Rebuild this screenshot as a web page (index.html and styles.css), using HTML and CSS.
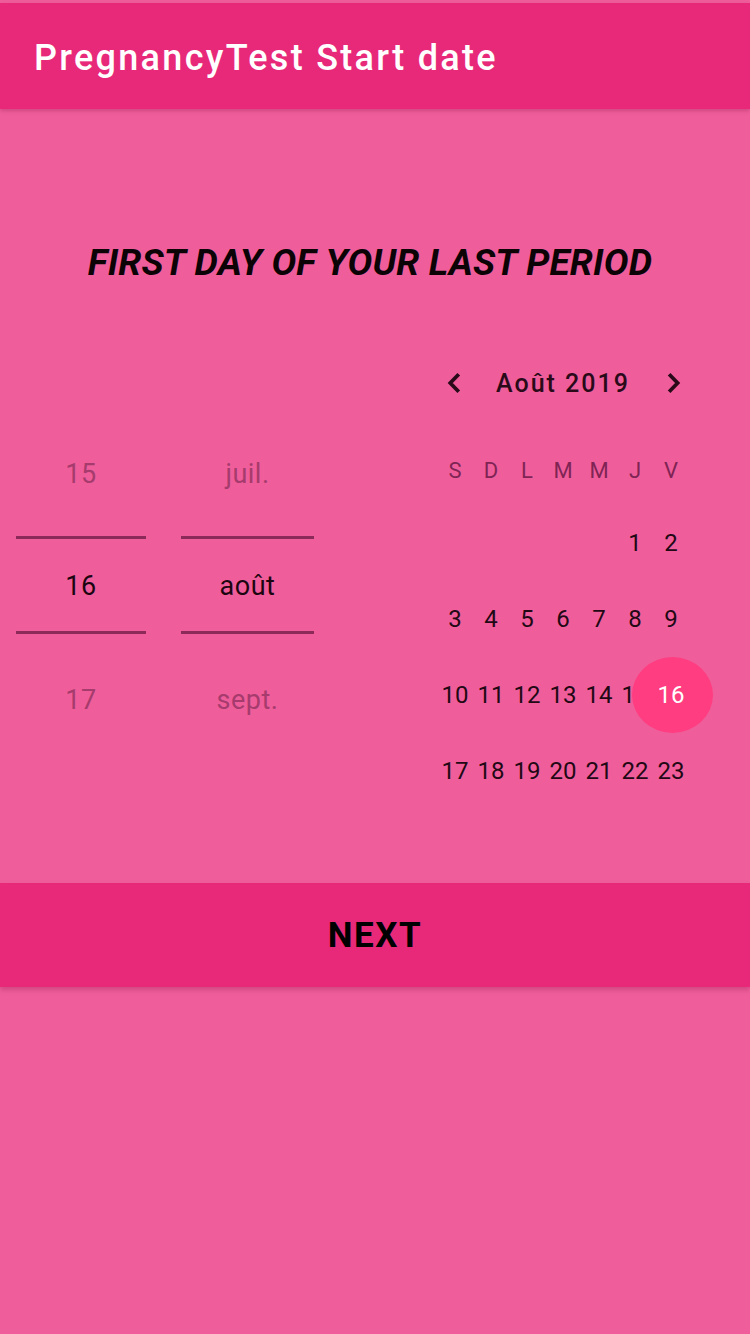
FILE: index.html
```html
<!DOCTYPE html>
<html lang="fr">
<head>
<meta charset="UTF-8">
<meta name="viewport" content="width=device-width, initial-scale=1.0">
<title>PregnancyTest Start date</title>
<link rel="stylesheet" href="styles.css">
</head>
<body>
<div class="app-bar">
    <h1>PregnancyTest Start date</h1>
</div>

<h2 class="heading">FIRST DAY OF YOUR LAST PERIOD</h2>

<div class="pickers">
    <!-- spinner style picker -->
    <div class="spinner">
        <div class="wheel day-wheel">
            <div class="item">15</div>
            <div class="item selected">16</div>
            <div class="item">17</div>
        </div>
        <div class="wheel month-wheel">
            <div class="item">juil.</div>
            <div class="item selected">août</div>
            <div class="item">sept.</div>
        </div>
    </div>

    <!-- calendar style picker -->
    <div class="calendar">
        <div class="cal-header">
            <span class="nav">
                <svg width="30" height="30" viewBox="0 0 24 24"><path d="M15 5 L8.2 12 L15 19" fill="none" stroke="#2a0a19" stroke-width="3"/></svg>
            </span>
            <span class="month-title">Août 2019</span>
            <span class="nav">
                <svg width="30" height="30" viewBox="0 0 24 24"><path d="M10.5 5 L17.3 12 L10.5 19" fill="none" stroke="#2a0a19" stroke-width="3"/></svg>
            </span>
        </div>
        <div class="weekdays">
            <span>S</span><span>D</span><span>L</span><span>M</span><span>M</span><span>J</span><span>V</span>
        </div>
        <div class="days">
            <span></span><span></span><span></span><span></span><span></span><span>1</span><span>2</span>
            <span>3</span><span>4</span><span>5</span><span>6</span><span>7</span><span>8</span><span>9</span>
            <span>10</span><span>11</span><span>12</span><span>13</span><span>14</span><span>15</span><span class="today">16</span>
            <span>17</span><span>18</span><span>19</span><span>20</span><span>21</span><span>22</span><span>23</span>
        </div>
    </div>
</div>

<button class="next-btn">NEXT</button>
</body>
</html>
```

FILE: styles.css
```css
body {
    font-family: Roboto, "Liberation Sans", sans-serif;
    margin: 0;
    padding: 0;
    background-color: #ef5e9b;
    color: #220814;
    min-height: 1334px;
}
.app-bar {
    margin-top: 3px;
    height: 106px;
    background-color: #e8297a;
    box-shadow: 0 2px 4px rgba(120, 0, 50, 0.25);
    display: flex;
    align-items: center;
}
.app-bar h1 {
    margin: 4px 0 0 34px;
    font-size: 36px;
    font-weight: 500;
    letter-spacing: 2.3px;
    color: #fff;
}
.heading {
    margin: 134px 10px 0 0;
    line-height: 40px;
    text-align: center;
    font-size: 37px;
    font-weight: 700;
    font-style: italic;
    letter-spacing: 0.2px;
    color: #0c0307;
}
.pickers {
    margin-top: 80px;
    display: flex;
    justify-content: space-between;
    align-items: flex-start;
    padding: 0 61px 0 16px;
}
.spinner {
    display: flex;
    gap: 35px;
    margin-top: 53px;
}
.wheel {
    display: flex;
    flex-direction: column;
}
.day-wheel {
    width: 130px;
}
.month-wheel {
    width: 133px;
}
.item {
    height: 113px;
    display: flex;
    align-items: center;
    justify-content: center;
    padding-top: 2px;
    box-sizing: border-box;
    font-size: 27px;
    letter-spacing: 0.5px;
    color: #a63b6d;
}
.item.selected {
    height: 98px;
    margin: 7px 0 8px;
    border-top: 3px solid #8c2b5a;
    border-bottom: 3px solid #8c2b5a;
    color: #1c0510;
}
.calendar {
    width: 252px;
}
.cal-header {
    height: 40px;
    display: flex;
    align-items: center;
    justify-content: space-between;
}
.nav {
    width: 36px;
    display: flex;
    justify-content: center;
}
.month-title {
    font-size: 25px;
    font-weight: 500;
    letter-spacing: 2px;
    color: #2a0a19;
}
.weekdays, .days {
    display: grid;
    grid-template-columns: repeat(7, 36px);
}
.weekdays {
    margin-top: 32px;
}
.weekdays span {
    height: 70px;
    display: flex;
    align-items: center;
    justify-content: center;
    font-size: 22px;
    color: #7f2454;
}
.days span {
    height: 76px;
    display: flex;
    align-items: center;
    justify-content: center;
    font-size: 24px;
    color: #220814;
}
.days .today {
    position: relative;
    z-index: 1;
    isolation: isolate;
    color: #fff;
}
.days .today::before {
    content: "";
    position: absolute;
    left: -21px;
    top: 0;
    width: 81px;
    height: 76px;
    border-radius: 50%;
    background-color: #ff3d80;
    z-index: -1;
}
.next-btn {
    display: block;
    width: 100%;
    height: 104px;
    margin-top: 74px;
    border: none;
    background-color: #e8297a;
    box-shadow: 0 3px 5px rgba(120, 0, 50, 0.25);
    font-family: Roboto, "Liberation Sans", sans-serif;
    font-size: 35px;
    font-weight: 700;
    letter-spacing: 1.5px;
    color: #000;
    cursor: pointer;
}
```
